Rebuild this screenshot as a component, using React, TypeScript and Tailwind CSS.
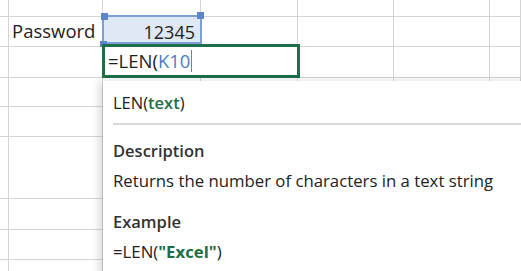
import React from 'react';

const cols = ['w-[9px]', 'w-[94px]', 'w-[98px]', 'w-[97px]', 'w-[96px]', 'w-[96px]', 'flex-1'];
const rows = [
  { h: 'h-[17px]', line: true },
  { h: 'h-[30px]', line: true },
  { h: 'h-[31px]', line: true },
  { h: 'h-[29px]', line: true },
  { h: 'h-[30px]', line: true },
  { h: 'h-[62px]', line: true },
  { h: 'h-[31px]', line: true },
  { h: 'h-[30px]', line: true },
  { h: 'h-[40px]', line: false },
];

const Cell = ({ w, h, line, children }: { w: string; h: string; line: boolean; children?: React.ReactNode }) => (
  <div className={`${w} ${h} shrink-0 border-r border-[#d4d4d4] ${line ? 'border-b' : ''} flex items-center overflow-hidden`}>
    {children}
  </div>
);

export default function App() {
  return (
    <div className="relative w-[521px] h-[271px] overflow-hidden bg-white font-['Open_Sans',sans-serif] text-[#222]">
      {/* sheet grid */}
      <div className="flex flex-col">
        {rows.map((r, ri) => (
          <div key={ri} className="flex">
            {cols.map((c, ci) => (
              <Cell key={ci} w={c} h={r.h} line={r.line}>
                {ri === 1 && ci === 1 && <span className="pl-[3px] text-[18.5px] leading-none">Password</span>}
                {ri === 1 && ci === 2 && (
                  <div className="w-full h-full bg-[#dfe8f5] flex items-center justify-end pr-[5px] text-[18px] leading-none">
                    12345
                  </div>
                )}
              </Cell>
            ))}
          </div>
        ))}
      </div>

      {/* selected reference K9 */}
      <div className="absolute left-[102px] top-[15px] w-[100px] h-[29px] border-2 border-[#7b9fd6]" />
      <div className="absolute left-[101px] top-[13px] w-[7px] h-[7px] bg-[#5b87c9]" />
      <div className="absolute left-[197px] top-[12px] w-[7px] h-[7px] bg-[#5b87c9]" />
      <div className="absolute left-[100px] top-[41px] w-[7px] h-[6px] bg-[#5b87c9]" />

      {/* active editing cell */}
      <div className="absolute left-[102px] top-[44px] w-[198px] h-[34px] border-[3px] border-[#1e6e49] bg-white flex items-center pl-[3px]">
        <span className="text-[18.5px] leading-none">=LEN(</span>
        <span className="text-[18.5px] leading-none text-[#4a7dc4]">K10</span>
        <span className="ml-[1px] w-px h-[22px] bg-[#6b85a8]" />
      </div>

      {/* function tooltip */}
      <div className="absolute left-[103px] top-[81px] w-[440px] h-[220px] bg-white shadow-[-4px_0_8px_rgba(0,0,0,0.14)] pl-[10px]">
        <div className="pt-[11px] text-[16.5px] leading-[22px]">
          LEN(<span className="font-semibold text-[#1e6e49]">text</span>)
        </div>
        <div className="mt-[9px] border-t-2 border-[#d8d8d8]" />
        <div className="mt-[15px] text-[16.5px] leading-[22px] font-semibold text-[#333]">Description</div>
        <div className="mt-[8px] text-[16.75px] leading-[22px]">Returns the number of characters in a text string</div>
        <div className="mt-[19px] text-[16.5px] leading-[22px] font-semibold text-[#333]">Example</div>
        <div className="mt-[8px] text-[16.75px] leading-[22px]">
          =LEN(<span className="font-bold text-[#1e6e49]">"Excel"</span>)
        </div>
      </div>
    </div>
  );
}
